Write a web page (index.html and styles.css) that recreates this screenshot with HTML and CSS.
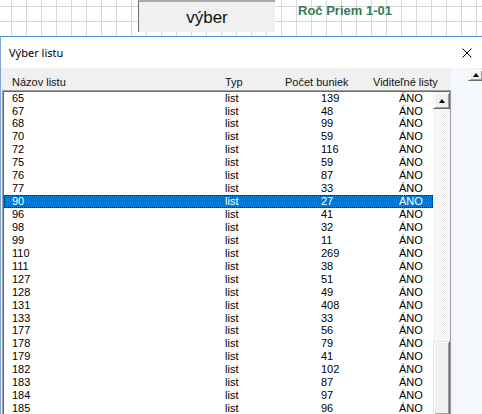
FILE: index.html
```html
<!DOCTYPE html>
<html lang="sk">
<head>
<meta charset="utf-8">
<title>Výber listu</title>
<link rel="stylesheet" href="styles.css">
</head>
<body>
<div class="sheet">
  <div class="btn-vyber">výber</div>
  <div class="sheet-title">Roč Priem 1-01</div>
</div>
<div class="dialog">
  <div class="titlebar">
    <span class="title">Výber listu</span>
    <svg class="close" viewBox="0 0 10 10" width="10" height="10"><path d="M0.5 0.5 L9.5 9.5 M9.5 0.5 L0.5 9.5" stroke="#000" stroke-width="1" fill="none"/></svg>
  </div>
  <div class="dbody">
    <div class="main">
      <div class="colheads">
        <span>Názov listu</span><span>Typ</span><span>Počet buniek</span><span>Viditeľné listy</span>
      </div>
      <div class="listbox">
        <div class="listbox-in">
          <div class="rows">
            <div class="row"><span>65</span><span>list</span><span>139</span><span>ÁNO</span></div>
            <div class="row"><span>67</span><span>list</span><span>48</span><span>ÁNO</span></div>
            <div class="row"><span>68</span><span>list</span><span>99</span><span>ÁNO</span></div>
            <div class="row"><span>70</span><span>list</span><span>59</span><span>ÁNO</span></div>
            <div class="row"><span>72</span><span>list</span><span>116</span><span>ÁNO</span></div>
            <div class="row"><span>75</span><span>list</span><span>59</span><span>ÁNO</span></div>
            <div class="row"><span>76</span><span>list</span><span>87</span><span>ÁNO</span></div>
            <div class="row"><span>77</span><span>list</span><span>33</span><span>ÁNO</span></div>
            <div class="row sel"><span>90</span><span>list</span><span>27</span><span>ÁNO</span></div>
            <div class="row"><span>96</span><span>list</span><span>41</span><span>ÁNO</span></div>
            <div class="row"><span>98</span><span>list</span><span>32</span><span>ÁNO</span></div>
            <div class="row"><span>99</span><span>list</span><span>11</span><span>ÁNO</span></div>
            <div class="row"><span>110</span><span>list</span><span>269</span><span>ÁNO</span></div>
            <div class="row"><span>111</span><span>list</span><span>38</span><span>ÁNO</span></div>
            <div class="row"><span>127</span><span>list</span><span>51</span><span>ÁNO</span></div>
            <div class="row"><span>128</span><span>list</span><span>49</span><span>ÁNO</span></div>
            <div class="row"><span>131</span><span>list</span><span>408</span><span>ÁNO</span></div>
            <div class="row"><span>133</span><span>list</span><span>33</span><span>ÁNO</span></div>
            <div class="row"><span>177</span><span>list</span><span>56</span><span>ÁNO</span></div>
            <div class="row"><span>178</span><span>list</span><span>79</span><span>ÁNO</span></div>
            <div class="row"><span>179</span><span>list</span><span>41</span><span>ÁNO</span></div>
            <div class="row"><span>182</span><span>list</span><span>102</span><span>ÁNO</span></div>
            <div class="row"><span>183</span><span>list</span><span>87</span><span>ÁNO</span></div>
            <div class="row"><span>184</span><span>list</span><span>97</span><span>ÁNO</span></div>
            <div class="row"><span>185</span><span>list</span><span>96</span><span>ÁNO</span></div>
          </div>
          <div class="vscroll">
            <div class="sbtn"><span class="tri"></span></div>
            <div class="track"></div>
            <div class="thumb"></div>
          </div>
        </div>
      </div>
    </div>
    <div class="side">
      <div class="side-strip"></div>
      <div class="side-main">
        <div class="sbtn small"><span class="tri"></span></div>
      </div>
    </div>
  </div>
</div>
</body>
</html>
```

FILE: styles.css
```css
* { box-sizing: border-box; }
html, body { margin: 0; padding: 0; }
body {
  width: 482px;
  height: 414px;
  overflow: hidden;
  background: #fff;
  font-family: "Liberation Sans", Arial, sans-serif;
  color: #000;
}

/* spreadsheet strip */
.sheet {
  height: 36px;
  display: flex;
  align-items: flex-start;
  background-color: #fff;
  background-image:
    linear-gradient(to right, #d8d8d8 1px, transparent 1px),
    linear-gradient(to bottom, #d8d8d8 1px, transparent 1px);
  background-size: 15px 15px;
  background-position: 11px 6px;
}
.btn-vyber {
  margin-left: 138px;
  width: 137px;
  height: 32px;
  background: #f0f0f0;
  border-top: 2px solid #a8a8a8;
  border-left: 1px solid #6e6e6e;
  display: flex;
  align-items: center;
  justify-content: center;
  padding-top: 2px;
  font-size: 17px;
  color: #111;
}
.sheet-title {
  margin-left: 23px;
  margin-top: 3px;
  font-weight: bold;
  font-size: 13px;
  line-height: 15px;
  color: #367a5a;
}

/* dialog */
.dialog {
  height: 378px;
  border-top: 1px solid #4a8fd9;
  border-left: 1px solid #7ea6d6;
  background: #fff;
}
.titlebar {
  height: 31px;
  display: flex;
  align-items: center;
  justify-content: space-between;
  padding: 0 10px 0 8px;
  background: #fff;
}
.title {
  font-family: "Noto Sans", "Liberation Sans", sans-serif;
  font-size: 11px;
}
.close { display: block; }

.dbody {
  display: flex;
  height: 347px;
  background: #f0f0f0;
}
.main {
  width: 450px;
  padding-left: 1px;
  display: flex;
  flex-direction: column;
}
.colheads {
  height: 24px;
  display: grid;
  grid-template-columns: 213px 60px 88px auto;
  padding: 8px 0 0 10px;
  font-size: 11px;
  line-height: 13px;
  color: #111;
}
.listbox {
  flex: 1;
  border: 1px solid;
  border-color: #a0a0a0 #a0a0a0 #fff #a0a0a0;
  border-bottom: 0;
}
.listbox-in {
  height: 100%;
  display: flex;
  border-top: 1px solid #696969;
  border-left: 1px solid #696969;
  background: #fff;
}
.rows {
  flex: 1;
  font-size: 11px;
}
.row {
  height: 12.94px;
  line-height: 12.94px;
  display: grid;
  grid-template-columns: 213px 96px 78px auto;
  padding-left: 8px;
  white-space: nowrap;
}
.row.sel {
  background: #0078d7;
  color: #fff;
  outline: 1px dotted #1a1a1a;
  outline-offset: -1px;
}

/* scrollbars */
.vscroll {
  width: 17px;
  display: flex;
  flex-direction: column;
  background: repeating-conic-gradient(#ececec 0 25%, #fff 0 50%) 0 0 / 2px 2px;
}
.sbtn {
  height: 17px;
  flex: none;
  background: #f0f0f0;
  border: 1px solid;
  border-color: #f0f0f0 #696969 #696969 #f0f0f0;
  box-shadow: inset 1px 1px #fff, inset -1px -1px #a0a0a0;
  display: flex;
  align-items: center;
  justify-content: center;
}
.tri {
  width: 0;
  height: 0;
  margin-top: 2px;
  border-left: 3.5px solid transparent;
  border-right: 3.5px solid transparent;
  border-bottom: 4px solid #000;
}
.track { height: 232px; flex: none; }
.thumb {
  flex: 1;
  background: #f0f0f0;
  border: 1px solid;
  border-color: #e3e3e3 #696969 #696969 #e3e3e3;
  box-shadow: inset 1px 1px #fff, inset -1px -1px #a0a0a0;
}

.side {
  flex: 1;
  display: flex;
  background: #f4f7fc;
}
.side-strip {
  width: 2px;
  margin-top: 24px;
  background: repeating-conic-gradient(#e6e6e6 0 25%, #fff 0 50%) 0 0 / 2px 2px;
}
.side-main {
  flex: 1;
  display: flex;
  flex-direction: column;
  align-items: flex-end;
  padding-top: 1px;
}
.sbtn.small {
  width: 14px;
  height: 12px;
  border-right: 0;
}
.sbtn.small .tri { margin-top: 0; }
```
